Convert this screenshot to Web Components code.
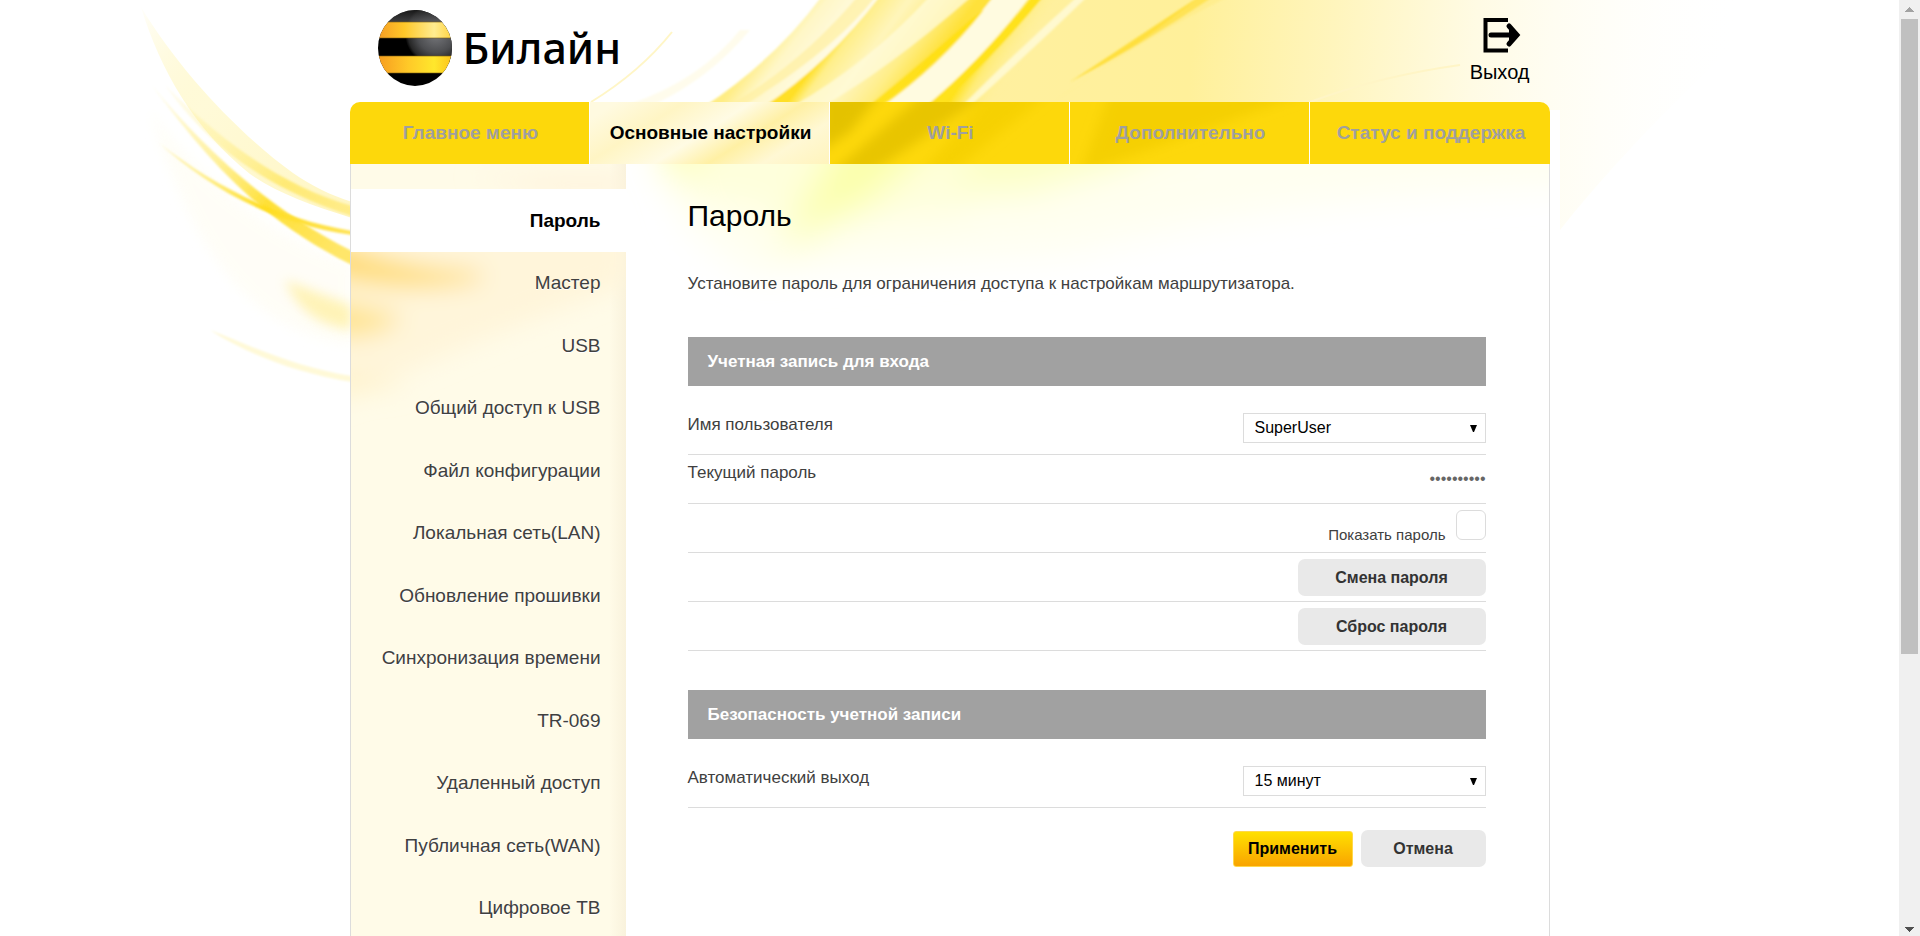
<!DOCTYPE html>
<html lang="ru">
<head>
<meta charset="utf-8">
<title>Билайн — Пароль</title>
<style>
  html, body { margin: 0; height: 100%; background: #fff; }
  body { font-family: "Liberation Sans", Arial, sans-serif; font-size: 17px; line-height: 20px; color: #404040; }
</style>
</head>
<body>
<router-page>
  <page-backdrop slot="backdrop"></page-backdrop>
  <brand-logo slot="header"></brand-logo>
  <exit-link slot="header" href="#exit">Выход</exit-link>
  <tab-bar slot="tabs">
    <tab-item href="#home">Главное меню</tab-item>
    <tab-item href="#basic" active>Основные настройки</tab-item>
    <tab-item href="#wifi">Wi-Fi</tab-item>
    <tab-item href="#more">Дополнительно</tab-item>
    <tab-item href="#status">Статус и поддержка</tab-item>
  </tab-bar>
  <side-menu slot="menu">
    <menu-item href="#password" active>Пароль</menu-item>
    <menu-item href="#master">Мастер</menu-item>
    <menu-item href="#usb">USB</menu-item>
    <menu-item href="#usb-share">Общий доступ к USB</menu-item>
    <menu-item href="#config">Файл конфигурации</menu-item>
    <menu-item href="#lan">Локальная сеть(LAN)</menu-item>
    <menu-item href="#firmware">Обновление прошивки</menu-item>
    <menu-item href="#time">Синхронизация времени</menu-item>
    <menu-item href="#tr069">TR-069</menu-item>
    <menu-item href="#remote">Удаленный доступ</menu-item>
    <menu-item href="#wan">Публичная сеть(WAN)</menu-item>
    <menu-item href="#tv">Цифровое ТВ</menu-item>
  </side-menu>
  <settings-panel heading="Пароль" note="Установите пароль для ограничения доступа к настройкам маршрутизатора.">
    <settings-section heading="Учетная запись для входа">
      <select-field label="Имя пользователя" options="SuperUser"></select-field>
      <password-field label="Текущий пароль" value="beeline123"></password-field>
      <check-field label="Показать пароль"></check-field>
      <button-field><action-button>Смена пароля</action-button></button-field>
      <button-field><action-button>Сброс пароля</action-button></button-field>
    </settings-section>
    <settings-section heading="Безопасность учетной записи">
      <select-field label="Автоматический выход" options="15 минут|30 минут|60 минут"></select-field>
    </settings-section>
    <form-actions>
      <action-button kind="primary">Применить</action-button>
      <action-button kind="small">Отмена</action-button>
    </form-actions>
  </settings-panel>
</router-page>

<script>
  const define = (name, render) => customElements.define(name, class extends HTMLElement {
    constructor() {
      super();
      this.attachShadow({ mode: 'open' });
    }
    connectedCallback() {
      this.shadowRoot.innerHTML = '<style>*{box-sizing:border-box}</style>' + render(this);
    }
  });

  const rowStyle = `
    :host { display: block; border-bottom: 1px solid #dcdcdc; }
    .row { display: flex; justify-content: space-between; height: 48px; }
    label { font-size: 17px; line-height: 20px; }
  `;

  define('router-page', () => `
    <style>
      :host { display: grid; grid-template-columns: minmax(0, 1fr) 21px; height: 100vh; overflow: hidden; }
      .view { position: relative; overflow: hidden; }
      .frame { position: relative; display: grid; grid-template-rows: 102px max-content 1fr; max-width: 1200px; height: 100%; margin: 0 auto; }
      header { display: flex; justify-content: space-between; align-items: flex-start; padding: 10px 20px 0 28px; }
      .body { display: grid; grid-template-columns: 275px minmax(0, 1fr); border: solid #dcdcdc; border-width: 0 1px; background: #fff; }
    </style>
    <div class="view">
      <slot name="backdrop"></slot>
      <div class="frame">
        <header><slot name="header"></slot></header>
        <slot name="tabs"></slot>
        <div class="body">
          <slot name="menu"></slot>
          <slot></slot>
        </div>
      </div>
    </div>
    <scroll-rail></scroll-rail>
  `);

  define('scroll-rail', () => `
    <style>
      :host { display: flex; flex-direction: column; align-items: center; background: #f0f0f0; }
      svg { display: block; flex: none; }
      .thumb { flex: 635; width: 17px; background: #c0c0c0; }
      .rest { flex: 263; }
    </style>
    <svg width="21" height="19"><path d="M6 12h9v-1h-1v-1h-1v-1h-1v-1h-1v-1h-1v1h-1v1h-1v1h-1v1h-1z" fill="#a3a3a3"/></svg>
    <div class="thumb"></div><div class="rest"></div>
    <svg width="21" height="19"><path d="M6 10h9v1h-1v1h-1v1h-1v1h-1v1h-1v-1h-1v-1h-1v-1h-1v-1h-1z" fill="#505050"/></svg>
  `);

  define('page-backdrop', () => `
    <style>
      :host { position: absolute; inset: 0 0 auto 0; }
      svg { display: block; width: 100%; height: 460px; }
    </style>
    <svg viewBox="0 0 1899 460" preserveAspectRatio="xMidYMin slice" aria-hidden="true">
      <defs>
        <linearGradient id="wash" gradientUnits="userSpaceOnUse" x1="960" y1="0" x2="1740" y2="60">
          <stop offset="0" stop-color="#fff0a0"/><stop offset=".3" stop-color="#fff09a"/>
          <stop offset=".48" stop-color="#fff5bd"/><stop offset=".66" stop-color="#fffbe4"/><stop offset="1" stop-color="#fff" stop-opacity="0"/>
        </linearGradient>
        <linearGradient id="a" gradientUnits="userSpaceOnUse" x1="770" y1="40" x2="815" y2="75">
          <stop offset="0" stop-color="#ffed85"/><stop offset=".35" stop-color="#fff7c6"/><stop offset="1" stop-color="#fffbe6"/>
        </linearGradient>
        <linearGradient id="b" gradientUnits="userSpaceOnUse" x1="826" y1="50" x2="900" y2="105">
          <stop offset="0" stop-color="#ffdf25"/><stop offset=".12" stop-color="#ffef8a"/><stop offset=".4" stop-color="#fff5bb"/><stop offset=".7" stop-color="#ffee88"/><stop offset="1" stop-color="#ffe13a"/>
        </linearGradient>
        <linearGradient id="d" gradientUnits="userSpaceOnUse" x1="975" y1="60" x2="1010" y2="82">
          <stop offset="0" stop-color="#ffe11c"/><stop offset=".3" stop-color="#ffec76"/><stop offset="1" stop-color="#fff1a4" stop-opacity="0"/>
        </linearGradient>
        <linearGradient id="fade" gradientUnits="userSpaceOnUse" x1="140" y1="0" x2="350" y2="220">
          <stop offset="0" stop-color="#fff3a8" stop-opacity="0"/><stop offset=".4" stop-color="#fffad8"/><stop offset="1" stop-color="#fff6c4"/>
        </linearGradient>
        <linearGradient id="gold" gradientUnits="userSpaceOnUse" x1="150" y1="90" x2="350" y2="240">
          <stop offset="0" stop-color="#ffe96a" stop-opacity=".1"/><stop offset=".35" stop-color="#ffea70" stop-opacity=".7"/><stop offset=".65" stop-color="#ffdd20"/><stop offset="1" stop-color="#ffe45a"/>
        </linearGradient>
        <filter id="s1" x="-20%" y="-20%" width="140%" height="140%"><feGaussianBlur stdDeviation="1"/></filter>
        <filter id="s5" x="-50%" y="-50%" width="200%" height="200%"><feGaussianBlur stdDeviation="6"/></filter>
      </defs>
      <!-- wide wash behind the header -->
      <path d="M1038 0H1780C1720 60 1640 130 1560 230V110H900Z" fill="url(#wash)"/>
      <!-- thin strands on the left of the wash -->
      <path d="M672 32Q640 72 591 102" stroke="#fff6c6" stroke-width="2" fill="none"/>
      <path d="M740 30Q700 80 630 104L655 104Q710 78 750 30Z" fill="#fffcec" filter="url(#s1)"/>
      <!-- ribbons -->
      <g filter="url(#s1)">
        <path d="M822-4H882Q838 58 765 108H702Q775 60 822-4Z" fill="url(#a)"/>
        <path d="M858-4H876Q835 50 740 108H725Q800 65 858-4Z" fill="#fff0a0" opacity=".7"/>
        <path d="M880-4H1010Q960 50 878 108H762Q830 62 880-4Z" fill="url(#b)"/>
        <path d="M930-4H972Q890 68 820 108H790Q870 62 930-4Z" fill="#fffbdc" opacity=".75"/>
        <path d="M994-4H1030Q980 62 926 108H876Q945 60 994-4Z" fill="#fffbe0"/>
        <path d="M984 10Q940 66 880 108H866Q925 60 970 20Z" fill="#ffdf12" opacity=".85"/>
        <path d="M1030-4H1095Q1030 60 985 108H924Q984 58 1030-4Z" fill="url(#d)"/>
        <path d="M1032-4H1044Q984 68 936 108H925Q984 58 1032-4Z" fill="#ffe21e"/>
        <path d="M1078-4Q1020 48 962 106L970 106Q1030 52 1088-4Z" fill="#fffbdc" opacity=".8"/>
        <path d="M1200-4Q1130 42 1070 82Q1140 46 1214-4Z" fill="#ffdf3c"/>
        <path d="M1200-4Q1140 44 1050 104L1100 70Q1160 30 1230-4Z" fill="#ffe978" opacity=".4"/>
      </g>
      <path d="M1310 102Q1380 76 1460 65" stroke="#fff5c6" stroke-width="2" fill="none"/>
      <!-- strands left of the frame -->
      <path d="M150 110C190 240 240 330 352 345V265C270 235 200 180 150 110Z" fill="#fffdf2" opacity=".6" filter="url(#s5)"/>
      <path d="M141 7C179 70 238 133 293 173C312 186 330 195 352 202V218C310 205 275 192 250 174C195 130 160 70 141 7Z" fill="url(#fade)"/>
      <path d="M165 85C200 135 255 185 352 216V206C290 188 230 150 165 85Z" fill="url(#gold)" opacity=".5" filter="url(#s1)"/>
      <path d="M150 83C200 150 255 218 352 265V251C270 210 205 150 150 83Z" fill="url(#gold)" opacity=".9" filter="url(#s1)"/>
      <path d="M159 143C200 180 262 222 352 235V231C270 217 210 182 159 143Z" fill="url(#gold)" filter="url(#s1)"/>
      <path d="M285 280C310 290 330 297 352 306V330C325 326 300 316 285 280Z" fill="#ffef9c" opacity=".7" filter="url(#s5)"/>
      <path d="M210 330C260 350 300 368 352 376V382C300 374 250 356 210 330Z" fill="#fff9d8" filter="url(#s1)"/>
    </svg>
  `);

  define('brand-logo', () => `
    <style>
      :host { display: block; }
      a { display: flex; align-items: center; gap: 10px; color: #000; text-decoration: none; }
      svg { display: block; }
      span { font: 500 43px/60px "Noto Sans", "Open Sans", sans-serif; }
    </style>
    <a href="#home">
      <svg width="75" height="76" viewBox="0 0 75 76" aria-hidden="true">
        <defs>
          <clipPath id="ball"><ellipse cx="37" cy="38" rx="37" ry="38"/></clipPath>
          <linearGradient id="y1"><stop offset="0" stop-color="#f59d24"/><stop offset=".35" stop-color="#ffc829"/><stop offset=".75" stop-color="#ffec90"/><stop offset="1" stop-color="#ffd23c"/></linearGradient>
          <linearGradient id="y2"><stop offset="0" stop-color="#f79d20"/><stop offset=".4" stop-color="#ffc928"/><stop offset=".75" stop-color="#ffe72c"/><stop offset="1" stop-color="#fcc11c"/></linearGradient>
          <radialGradient id="k" gradientUnits="userSpaceOnUse" cx="58" cy="24" r="31"><stop offset="0" stop-color="#77787c"/><stop offset=".6" stop-color="#4c4d50"/><stop offset=".9" stop-color="#262626"/><stop offset="1" stop-color="#000"/></radialGradient>
          <linearGradient id="t" x2="0" y2="1"><stop offset="0" stop-color="#222"/><stop offset="1" stop-color="#5c5d60"/></linearGradient>
        </defs>
        <g clip-path="url(#ball)">
          <rect width="75" height="76" fill="#000"/>
          <circle cx="58" cy="24" r="31" fill="url(#k)"/>
          <rect width="75" height="13" fill="url(#t)" opacity=".7"/>
          <rect y="12" width="75" height="16" fill="url(#y1)"/>
          <rect y="46" width="75" height="17" fill="url(#y2)"/>
          <path d="M0 12h75M0 28h75M0 46h75M0 63h75" stroke="#7a5a10" stroke-opacity=".6"/>
        </g>
      </svg>
      <span>Билайн</span>
    </a>
  `);

  define('exit-link', el => `
    <style>
      :host { display: block; }
      a { display: flex; flex-direction: column; align-items: center; gap: 8px; padding-top: 7px; color: #000; font-size: 20px; line-height: 22px; text-decoration: none; }
      svg { display: block; margin-left: 4px; }
    </style>
    <a href="${el.getAttribute('href')}">
      <svg width="38" height="36" viewBox="0 0 38 36" fill="none" stroke="#000" aria-hidden="true">
        <path d="M25 3H2.500V33.500H25" stroke-width="4"/>
        <path d="M8 18H33" stroke-width="5" stroke-linecap="round"/>
        <path d="M26 9L34 18L26 27" stroke-width="5" stroke-linecap="round"/>
        <path d="M26 12L33 18L26 24Z" fill="#000" stroke="none"/>
      </svg>
      <slot></slot>
    </a>
  `);

  define('tab-bar', () => `
    <style>
      :host { position: relative; display: block; overflow: hidden; border-radius: 10px 10px 0 0; background: #fdd80b; }
      svg { position: absolute; inset: 0; width: 100%; height: 100%; }
      nav { position: relative; display: grid; grid-template-columns: repeat(5, minmax(0, 1fr)); height: 62px; }
    </style>
    <svg viewBox="0 0 1200 62" preserveAspectRatio="none" aria-hidden="true">
      <filter id="f" x="-20%" y="-20%" width="140%" height="140%"><feGaussianBlur stdDeviation="6"/></filter>
      <g filter="url(#f)">
        <path d="M470-10H532L500 30L470 50Z" fill="#e4c200"/>
        <path d="M575-10H640L520 72H480Z" fill="#e8c500"/>
        <path d="M640-10H700L600 72H570Z" fill="#f5cf02" opacity=".8"/>
        <path d="M760-10H960L820 40L730 72Z" fill="#f3cd02" opacity=".8"/>
      </g>
    </svg>
    <nav><slot></slot></nav>
  `);

  define('tab-item', el => `
    <style>
      :host { display: block; border-right: 1px solid #fff; }
      :host(:last-child) { border-right: 0; }
      :host([active]) { background: linear-gradient(148deg, #fffae0 8%, #fff5c4 28%, #fffbe4 48%, #fff0a4 64%, #fff8d4 80%, #fff4bc); }
      a { display: flex; align-items: center; justify-content: center; height: 100%; padding-left: 3px; font-size: 19px; font-weight: bold; color: #9f9f9f; text-decoration: none; white-space: nowrap; }
      :host([active]) a { color: #000; }
    </style>
    <a href="${el.getAttribute('href')}"><slot></slot></a>
  `);

  define('side-menu', () => `
    <style>
      :host { position: relative; display: block; overflow: hidden; padding-top: 25px; background: linear-gradient(to right, #fffbe8 94%, #f9f2dc); }
      svg { position: absolute; inset: 0 0 auto 0; width: 100%; height: 300px; }
      nav { position: relative; display: grid; grid-auto-rows: 63px 62px; }
    </style>
    <svg viewBox="0 0 275 300" preserveAspectRatio="none" aria-hidden="true">
      <filter id="f" x="-30%" y="-30%" width="160%" height="160%"><feGaussianBlur stdDeviation="12"/></filter>
      <g filter="url(#f)">
        <path d="M-20 60H275V120L120 180L-20 240Z" fill="#fff5da"/>
        <path d="M-30 70C30 96 70 105 130 108V116C60 130 20 120-30 112Z" fill="#ffdc74"/>
        <path d="M-30 132C10 140 30 148 50 150C40 168 20 174-30 174Z" fill="#ffe492"/>
        <path d="M-20 205C10 210 30 218 60 222L-20 232Z" fill="#fff3cc"/>
        <path d="M120 12H275V30H200Z" fill="#fff3dc"/>
      </g>
    </svg>
    <nav><slot></slot></nav>
  `);

  define('menu-item', el => `
    <style>
      :host { display: block; }
      a { display: flex; align-items: center; justify-content: flex-end; height: 100%; padding-right: 25px; font-size: 19px; line-height: 22px; color: #404040; text-decoration: none; text-shadow: 0 1px 0 #fff; }
      :host([active]) { background: #fff; }
      :host([active]) a { font-weight: bold; color: #000; }
    </style>
    <a href="${el.getAttribute('href')}"><slot></slot></a>
  `);

  define('settings-panel', el => `
    <style>
      :host { position: relative; display: block; padding: 34px 63px 0 62px; }
      svg { position: absolute; inset: 0 0 auto 0; width: 100%; height: 150px; }
      main { position: relative; }
      h1 { margin: 0; font-size: 30px; line-height: 36px; font-weight: normal; color: #000; }
      p { margin: 40px 0 0; font-size: 17px; line-height: 20px; }
    </style>
    <svg viewBox="0 0 923 150" preserveAspectRatio="none" aria-hidden="true">
      <filter id="f" x="-30%" y="-50%" width="160%" height="200%"><feGaussianBlur stdDeviation="18"/></filter>
      <g filter="url(#f)">
        <path d="M30-60H960V20C700 30 560 60 440 90L120 110L60 60Z" fill="#fffff0"/>
        <path d="M30-60H480L330 50L180 60L60 30Z" fill="#feffdc"/>
        <path d="M30-60H100L60 20L40 10Z" fill="#fdffb8"/>
        <path d="M230-60H350L240 40L150 90L190 20Z" fill="#fbffaa"/>
        <path d="M350-60H620L500 0L400 30L330 30Z" fill="#fcffc6"/>
      </g>
    </svg>
    <main>
      <h1>${el.getAttribute('heading')}</h1>
      <p>${el.getAttribute('note')}</p>
      <slot></slot>
    </main>
  `);

  define('settings-section', el => `
    <style>
      :host { display: block; margin-top: 39px; }
      :host(:first-child) { margin-top: 43px; }
      h2 { display: flex; align-items: center; height: 49px; margin: 0; padding: 0 20px; background: #a1a1a1; color: #fff; font-size: 17px; line-height: 20px; }
    </style>
    <section><h2>${el.getAttribute('heading')}</h2><slot></slot></section>
  `);

  define('select-field', el => `
    <style>
      ${rowStyle}
      .row { height: 68px; padding-top: 27px; }
      label { margin-top: 2px; }
      .box { position: relative; height: 30px; }
      select { appearance: none; width: 243px; height: 30px; padding: 0 30px 0 11px; border: 1px solid #dcdcdc; border-radius: 0; background: #fff; color: #000; font: 16px/20px "Liberation Sans", Arial, sans-serif; }
      svg { position: absolute; right: 9px; top: 12px; pointer-events: none; }
    </style>
    <div class="row">
      <label for="field">${el.getAttribute('label')}</label>
      <div class="box">
        <select id="field">${el.getAttribute('options').split('|').map(o => `<option>${o}</option>`).join('')}</select>
        <svg width="7" height="7" aria-hidden="true"><path d="M0 0H7L4 7H3Z"/></svg>
      </div>
    </div>
  `);

  define('password-field', el => `
    <style>
      ${rowStyle}
      label { margin-top: 8px; }
      input { width: 243px; height: 48px; padding: 0; border: 0; background: none; text-align: right; color: #666; font: 16px/20px "Liberation Sans", Arial, sans-serif; }
    </style>
    <div class="row">
      <label for="field">${el.getAttribute('label')}</label>
      <input id="field" type="password" readonly value="${el.getAttribute('value')}">
    </div>
  `);

  define('check-field', el => `
    <style>
      ${rowStyle}
      .row { justify-content: flex-end; gap: 10px; padding-top: 6px; }
      label { margin-top: 15px; font-size: 15px; }
      input { appearance: none; width: 30px; height: 30px; margin: 0; border: 1px solid #dcdcdc; border-radius: 6px; background: #fff; }
      input:checked { background: #fdd80b; }
    </style>
    <div class="row">
      <label for="field">${el.getAttribute('label')}</label>
      <input id="field" type="checkbox">
    </div>
  `);

  define('button-field', () => `
    <style>
      ${rowStyle}
      .row { justify-content: flex-end; padding-top: 6px; }
    </style>
    <div class="row"><slot></slot></div>
  `);

  define('form-actions', () => `
    <style>
      :host { display: flex; justify-content: flex-end; align-items: flex-end; gap: 8px; margin-top: 22px; }
    </style>
    <slot></slot>
  `);

  define('action-button', () => `
    <style>
      :host { display: block; }
      button { display: block; width: 188px; height: 37px; padding: 0; border: 0; border-radius: 7px; background: #e9e9e9; color: #333; font: bold 16px/20px "Liberation Sans", Arial, sans-serif; cursor: pointer; }
      :host([kind="small"]) button { width: 125px; }
      :host([kind="primary"]) button { width: 120px; height: 36px; border: 1px solid #ffd84a; border-radius: 3px; background: linear-gradient(#ffe000, #f9a400); color: #000; }
    </style>
    <button type="button"><slot></slot></button>
  `);
</script>
</body>
</html>
